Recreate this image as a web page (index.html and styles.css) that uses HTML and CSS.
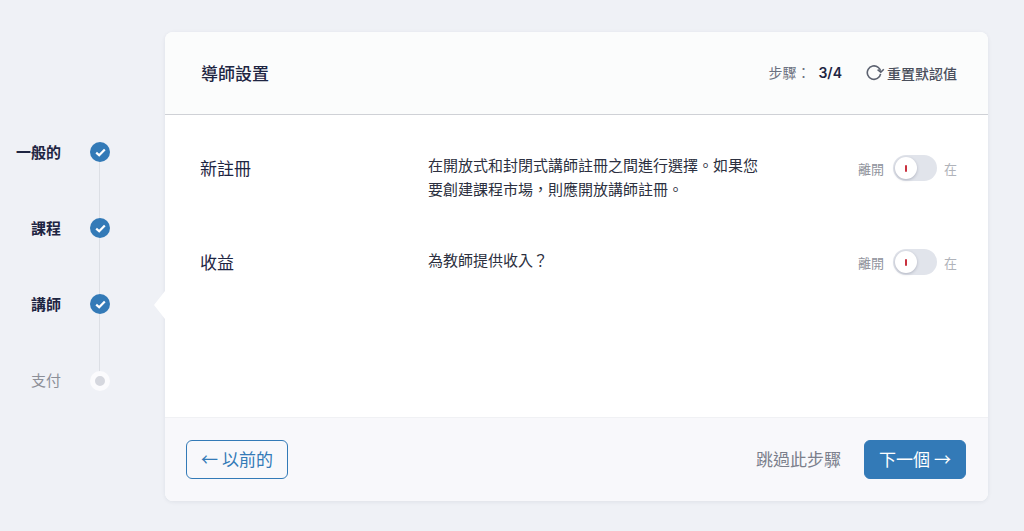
FILE: index.html

```html
<!DOCTYPE html>
<html>
<head>
  <title>導師設置</title>
  <link rel="stylesheet" href="styles.css">
</head>
<body>
  <div class="wizard">
    <ul class="steps">
      <li class="step done"><span class="step-name">一般的</span><span class="dot"><svg width="11" height="9" viewBox="0 0 11 9"><path d="M1.2 4.6l3 2.7L9.8 1.5" fill="none" stroke="#fff" stroke-width="2.2"/></svg></span></li>
      <li class="step done"><span class="step-name">課程</span><span class="dot"><svg width="11" height="9" viewBox="0 0 11 9"><path d="M1.2 4.6l3 2.7L9.8 1.5" fill="none" stroke="#fff" stroke-width="2.2"/></svg></span></li>
      <li class="step done active"><span class="step-name">講師</span><span class="dot"><svg width="11" height="9" viewBox="0 0 11 9"><path d="M1.2 4.6l3 2.7L9.8 1.5" fill="none" stroke="#fff" stroke-width="2.2"/></svg></span></li>
      <li class="step todo"><span class="step-name">支付</span><span class="dot"></span></li>
    </ul>

    <div class="card">
      <div class="card-head">
        <h1>導師設置</h1>
        <div class="head-right">
          <span class="step-count">步驟： <b>3/4</b></span>
          <a class="reset">
            <svg width="19" height="18" viewBox="0 0 19 18"><path d="M14.6 9.8A6.7 6.7 0 1 1 12.2 3.4C13.4 4.2 14.2 5.4 14.6 6.8" fill="none" stroke="#5c6270" stroke-width="1.6"/><path d="M11.6 5.6L14.8 8.2L17.8 5.2" fill="none" stroke="#5c6270" stroke-width="1.6"/></svg>
            重置默認值
          </a>
        </div>
      </div>

      <div class="card-body">
        <div class="row">
          <div class="row-title">新註冊</div>
          <div class="row-desc">在開放式和封閉式講師註冊之間進行選擇。如果您要創建課程市場，則應開放講師註冊。</div>
          <div class="switch-wrap">
            <span>離開</span>
            <span class="switch"><span class="knob"><i></i></span></span>
            <span class="on-label">在</span>
          </div>
        </div>
        <div class="row">
          <div class="row-title">收益</div>
          <div class="row-desc">為教師提供收入？</div>
          <div class="switch-wrap">
            <span>離開</span>
            <span class="switch"><span class="knob"><i></i></span></span>
            <span class="on-label">在</span>
          </div>
        </div>
      </div>

      <div class="card-foot">
        <button class="btn btn-back">← 以前的</button>
        <div class="foot-right">
          <a class="skip">跳過此步驟</a>
          <button class="btn btn-next">下一個 →</button>
        </div>
      </div>
    </div>
  </div>
</body>
</html>
```

FILE: styles.css

```css
* { box-sizing: border-box; }
html, body { height: 100%; }
body { margin: 0; background: #eff1f6; font-family: "Inter", "Noto Sans CJK TC", sans-serif; color: #1e2542; overflow: hidden; }
.wizard { display: flex; align-items: flex-start; padding: 32px 36px 0 0; }

.steps { list-style: none; margin: 82px 0 0; padding: 0; width: 165px; flex: none; }
.step { display: flex; justify-content: flex-end; align-items: center; height: 76px; padding-right: 55px; gap: 29px; position: relative; font-size: 15px; font-weight: 600; }
.step-name { margin-top: -2px; }
.step:not(:last-child)::after { content: ""; position: absolute; left: 99px; top: 38px; width: 1px; height: 76px; background: #dcdfe5; }
.dot { width: 20px; height: 20px; flex: none; border-radius: 50%; background: #337ab7; display: flex; align-items: center; justify-content: center; position: relative; z-index: 1; }
.todo { color: #8c8f98; font-weight: 400; }
.todo .dot { background: #d5d7de; border: 5px solid #fbfbfd; margin-top: 1px; }
.active::before { content: ""; position: absolute; right: 0; top: 25px; border-style: solid; border-width: 14px 11px 14px 0; border-color: transparent #fff transparent transparent; }

.card { width: 823px; height: 469px; background: #fff; border-radius: 8px; box-shadow: 0 1px 4px rgba(30, 37, 66, .08); display: flex; flex-direction: column; overflow: hidden; }
.card-head { height: 83px; flex: none; display: flex; justify-content: space-between; align-items: center; padding: 0 31px 0 36px; background: #fbfcfc; border-bottom: 1px solid #cfd1d6; }
h1 { margin: -2px 0 0; font-size: 17px; font-weight: 500; }
.head-right { display: flex; align-items: center; gap: 24px; }
.step-count { font-size: 14px; color: #6b7180; margin-top: -2px; }
.step-count b { color: #1e2542; font-weight: 600; margin-left: 4px; }
.reset { display: flex; align-items: center; gap: 2px; font-size: 14px; font-weight: 500; color: #4a4f5c; }

.card-body { flex: 1; padding: 38px 31px 0 35px; }
.row { display: flex; align-items: flex-start; min-height: 54px; margin-bottom: 40px; }
.row-title { width: 228px; flex: none; font-size: 17px; line-height: 30px; margin-top: 1px; }
.row-desc { width: 340px; flex: none; font-size: 15px; line-height: 24px; color: #2c3040; margin-top: 1px; }
.row:last-child .row-desc { margin-top: 2px; }
.switch-wrap { margin-left: auto; display: flex; align-items: center; gap: 9px; font-size: 13px; color: #90939c; margin-top: 2px; }
.on-label { color: #b0b3ba; margin-left: -2px; }
.switch { width: 44px; height: 26px; border-radius: 13px; background: #e1e4eb; display: block; position: relative; }
.knob { position: absolute; left: 2px; top: 2px; width: 22px; height: 22px; border-radius: 50%; background: #fff; box-shadow: 0 1px 3px rgba(30, 37, 66, .25); display: flex; align-items: center; justify-content: center; }
.knob i { width: 2px; height: 7px; background: #c9303e; border-radius: 1px; }

.card-foot { height: 84px; flex: none; display: flex; justify-content: space-between; align-items: center; padding: 0 22px 0 21px; background: #f8f8fb; border-top: 1px solid #f0f1f4; }
.foot-right { display: flex; align-items: center; gap: 23px; }
.skip { font-size: 17px; color: #7b7f8c; margin-top: -2px; }
.btn { height: 39px; width: 102px; border-radius: 6px; font-family: "Noto Sans CJK TC", sans-serif; font-size: 17px; padding: 0 0 2px; cursor: pointer; }
.btn-back { background: transparent; border: 1px solid #337ab7; color: #337ab7; }
.btn-next { background: #337ab7; border: 1px solid #337ab7; color: #fff; }
```
